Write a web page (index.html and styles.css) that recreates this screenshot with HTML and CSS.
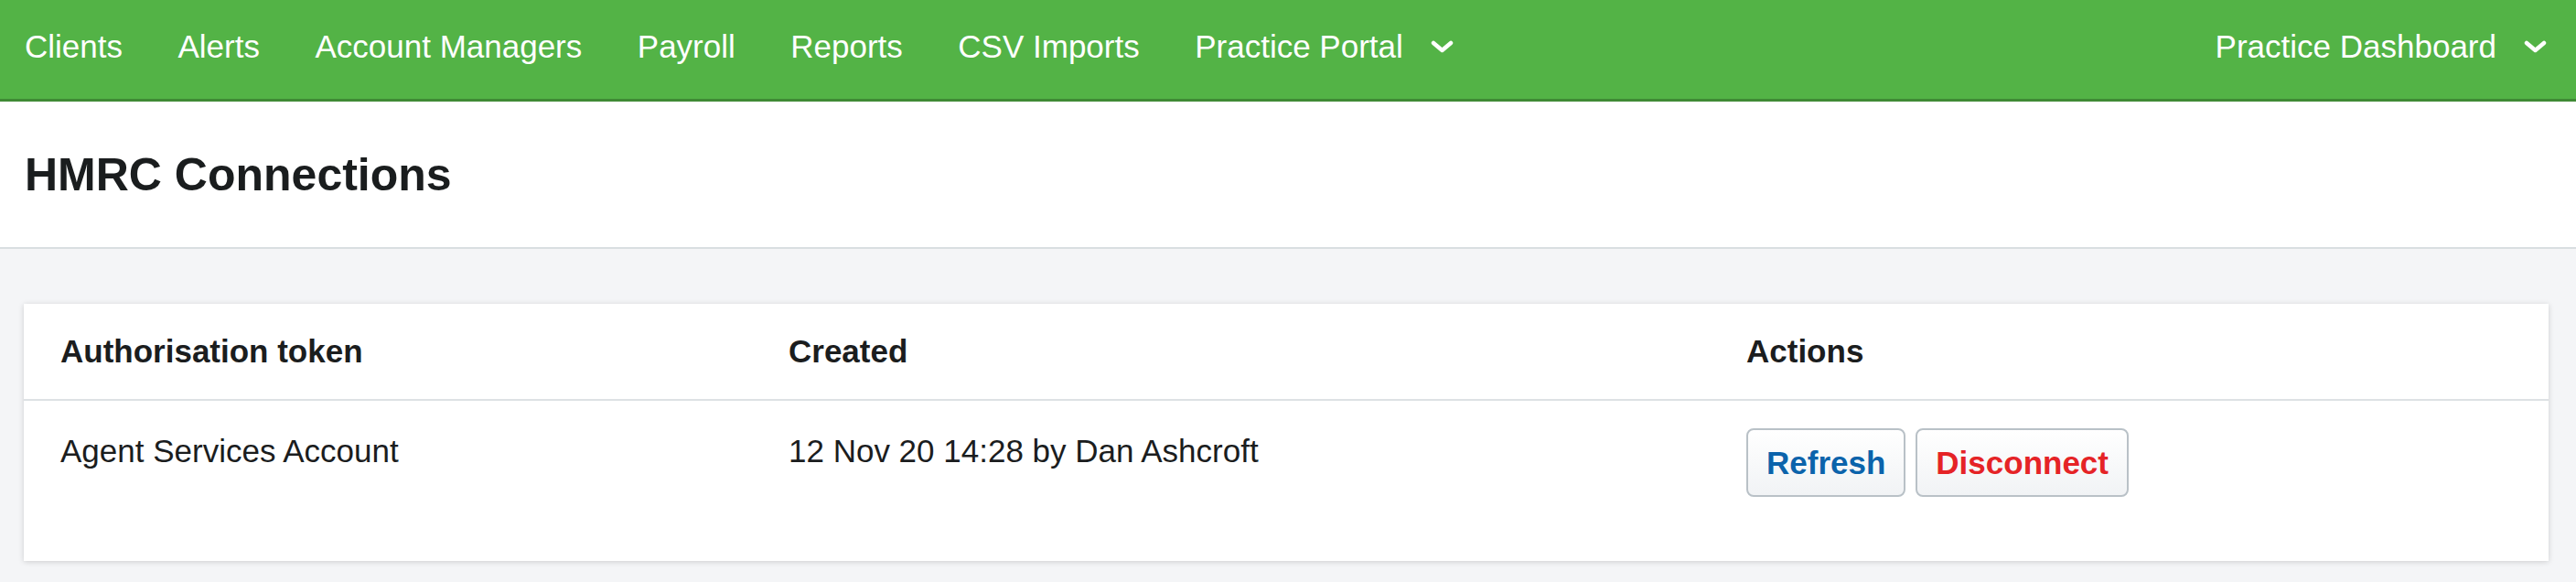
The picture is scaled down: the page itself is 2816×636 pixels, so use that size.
FILE: index.html
```html
<!DOCTYPE html>
<html lang="en">
<head>
<meta charset="utf-8">
<title>HMRC Connections</title>
<link rel="stylesheet" href="styles.css">
</head>
<body>
<nav class="topnav">
  <ul class="nav-list">
    <li class="nav-item">Clients</li>
    <li class="nav-item">Alerts</li>
    <li class="nav-item">Account Managers</li>
    <li class="nav-item">Payroll</li>
    <li class="nav-item">Reports</li>
    <li class="nav-item">CSV Imports</li>
    <li class="nav-item nav-dropdown">Practice Portal
      <svg class="chev" viewBox="0 0 25 14" aria-hidden="true"><path d="M3 3 L12.5 11 L22 3"/></svg>
    </li>
  </ul>
  <div class="nav-item nav-dropdown">Practice Dashboard
    <svg class="chev" viewBox="0 0 25 14" aria-hidden="true"><path d="M3 3 L12.5 11 L22 3"/></svg>
  </div>
</nav>

<header class="page-header">
  <h1 class="page-title">HMRC Connections</h1>
</header>

<main class="content">
  <section class="card">
    <div class="row row-head">
      <div class="cell">Authorisation token</div>
      <div class="cell">Created</div>
      <div class="cell">Actions</div>
    </div>
    <div class="row row-body">
      <div class="cell">Agent Services Account</div>
      <div class="cell">12 Nov 20 14:28 by Dan Ashcroft</div>
      <div class="cell actions">
        <button class="btn btn-refresh">Refresh</button>
        <button class="btn btn-disconnect">Disconnect</button>
      </div>
    </div>
  </section>
</main>
</body>
</html>
```

FILE: styles.css
```css
html, body {
  margin: 0;
  padding: 0;
}

body {
  font-family: "Liberation Sans", Arial, Helvetica, sans-serif;
  background: #f4f5f7;
  color: #1b1d1e;
  min-height: 636px;
}

/* Top navigation */
.topnav {
  display: flex;
  justify-content: space-between;
  align-items: center;
  height: 108px;
  box-sizing: content-box;
  padding: 0 32px 7px 27px;
  margin: 0;
  background: #53b346;
  border-bottom: 3px solid #3f8a35;
  box-sizing: border-box;
  height: 111px;
}

.nav-list {
  display: flex;
  align-items: center;
  gap: 60.5px;
  list-style: none;
  margin: 0;
  padding: 0;
}

.nav-item {
  color: #ffffff;
  font-size: 35px;
  line-height: 40px;
  white-space: nowrap;
  display: flex;
  align-items: center;
}

.nav-dropdown .chev {
  width: 25px;
  height: 14px;
  margin-left: 30px;
  fill: none;
  stroke: #ffffff;
  stroke-width: 4.5;
  stroke-linecap: round;
  stroke-linejoin: round;
}

/* Page header */
.page-header {
  display: flex;
  align-items: center;
  height: 159px;
  padding: 0 27px;
  background: #ffffff;
  border-bottom: 2px solid #d9dee1;
}

.page-title {
  margin: 0;
  font-size: 50px;
  font-weight: bold;
  line-height: 58px;
  color: #1a1d1e;
}

/* Content */
.content {
  padding: 60px 30px 0 26px;
}

.card {
  background: #ffffff;
  box-shadow: 0 1px 6px rgba(0, 0, 0, 0.16);
}

.row {
  display: grid;
  grid-template-columns: 796px 1047px 1fr;
  padding: 0 40px;
  font-size: 35px;
  line-height: 50px;
  color: #1b1d1e;
}

.row-head {
  font-weight: bold;
  padding-top: 27px;
  padding-bottom: 27px;
  border-bottom: 2px solid #dde1e4;
}

.row-body {
  padding-top: 30px;
  padding-bottom: 70px;
}

.actions {
  display: flex;
  align-items: flex-start;
  gap: 11px;
}

.btn {
  height: 75px;
  padding: 0 20px;
  border: 2px solid #b9c1c7;
  border-radius: 8px;
  background: linear-gradient(#ffffff, #f1f3f5);
  font-family: "Liberation Sans", Arial, Helvetica, sans-serif;
  font-size: 35px;
  font-weight: bold;
  line-height: 40px;
  cursor: pointer;
}

.btn-refresh {
  color: #0b63ab;
}

.btn-disconnect {
  color: #e52326;
}
```
